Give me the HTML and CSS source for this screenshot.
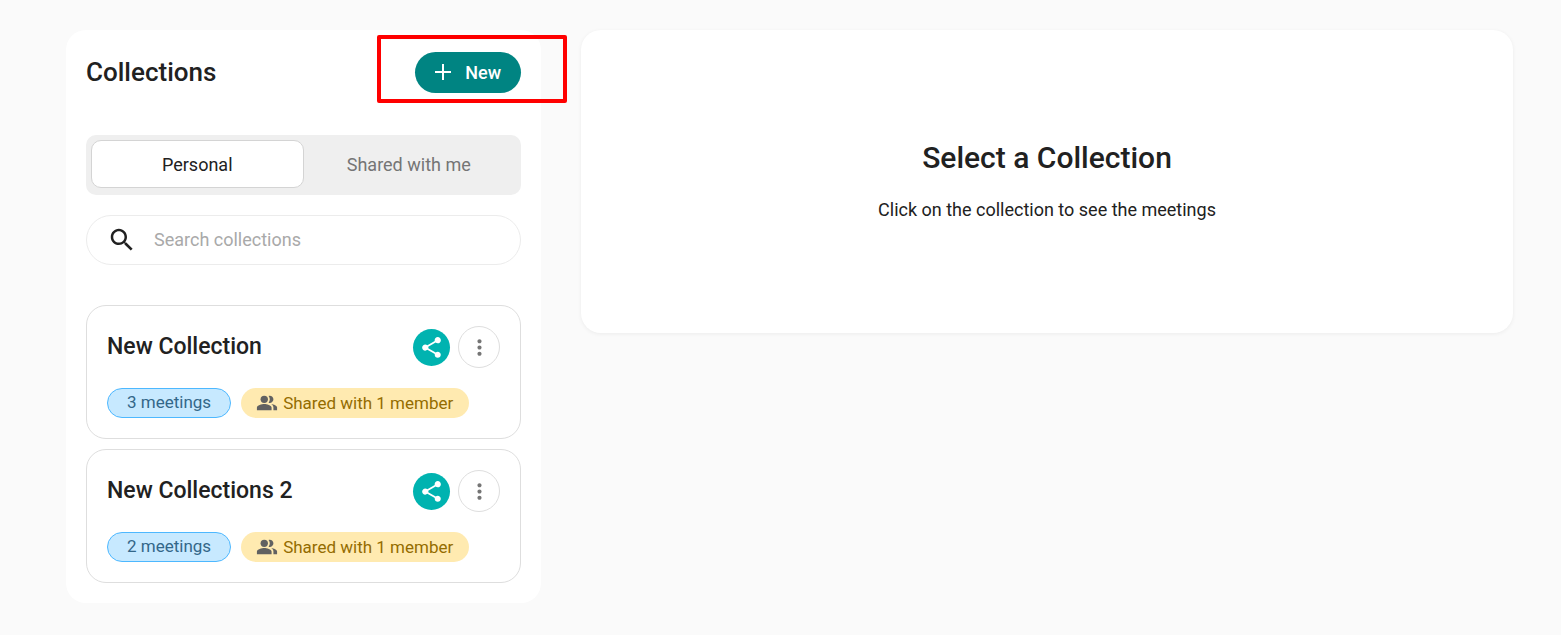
FILE: index.html
```html
<!DOCTYPE html>
<html lang="en">
<head>
<meta charset="utf-8">
<meta name="viewport" content="width=device-width, initial-scale=1">
<title>Collections</title>
<link rel="stylesheet" href="styles.css">
</head>
<body>
<svg class="sprite" aria-hidden="true">
  <symbol id="share" viewBox="0 0 24 24"><path d="M18 16.08c-.76 0-1.44.3-1.96.77L8.91 12.7c.05-.23.09-.46.09-.7s-.04-.47-.09-.7l7.05-4.11c.54.5 1.25.81 2.04.81 1.66 0 3-1.34 3-3s-1.34-3-3-3-3 1.34-3 3c0 .24.04.47.09.7L8.04 9.81C7.5 9.31 6.79 9 6 9c-1.66 0-3 1.34-3 3s1.34 3 3 3c.79 0 1.5-.31 2.04-.81l7.12 4.16c-.05.21-.08.43-.08.65 0 1.61 1.31 2.92 2.92 2.92s2.92-1.31 2.92-2.92-1.31-2.92-2.92-2.92z"/></symbol>
  <symbol id="more" viewBox="0 0 24 24"><path d="M12 8c1.1 0 2-.9 2-2s-.9-2-2-2-2 .9-2 2 .9 2 2 2zm0 2c-1.1 0-2 .9-2 2s.9 2 2 2 2-.9 2-2-.9-2-2-2zm0 6c-1.1 0-2 .9-2 2s.9 2 2 2 2-.9 2-2-.9-2-2-2z"/></symbol>
  <symbol id="people" viewBox="0 0 24 24"><path d="M16.67 13.13C18.04 14.06 19 15.32 19 17v3h4v-3c0-2.18-3.57-3.47-6.33-3.87z"/><circle cx="9" cy="8" r="4"/><path d="M15 12c2.21 0 4-1.79 4-4s-1.79-4-4-4c-.47 0-.91.1-1.33.24C14.5 5.27 15 6.58 15 8s-.5 2.73-1.33 3.76c.42.14.86.24 1.33.24zM9 13c-2.67 0-8 1.34-8 4v3h16v-3c0-2.66-5.33-4-8-4z"/></symbol>
</svg>
<div class="page">
  <aside class="sidebar">
    <header class="sidebar-header">
      <h1 class="sidebar-title">Collections</h1>
      <button class="new-button" type="button">
        <svg class="new-icon" viewBox="0 0 16 16" aria-hidden="true"><path d="M8 0v16M0 8h16"/></svg>
        New
      </button>
      <div class="highlight"></div>
    </header>
    <div class="tabs">
      <button class="tab tab-active" type="button">Personal</button>
      <button class="tab" type="button">Shared with me</button>
    </div>
    <label class="search">
      <svg class="search-icon" viewBox="0 0 24 24" aria-hidden="true"><path d="M15.5 14h-.79l-.28-.27C15.41 12.59 16 11.11 16 9.5 16 5.91 13.09 3 9.5 3S3 5.91 3 9.5 5.91 16 9.5 16c1.61 0 3.09-.59 4.23-1.57l.27.28v.79l5 4.99L20.49 19l-4.99-5zm-6 0C7.01 14 5 11.99 5 9.5S7.01 5 9.5 5 14 7.01 14 9.5 11.99 14 9.5 14z"/></svg>
      <input class="search-input" type="text" placeholder="Search collections" aria-label="Search collections">
    </label>
    <div class="collections">
      <article class="card">
        <div class="card-header">
          <h2 class="card-title">New Collection</h2>
          <button class="share-button" type="button" aria-label="Share"><svg class="share-icon"><use href="#share"/></svg></button>
          <button class="more-button" type="button" aria-label="More options"><svg class="more-icon"><use href="#more"/></svg></button>
        </div>
        <div class="chips">
          <span class="chip chip-meetings">3 meetings</span>
          <span class="chip chip-shared"><svg class="people-icon"><use href="#people"/></svg>Shared with 1 member</span>
        </div>
      </article>
      <article class="card">
        <div class="card-header">
          <h2 class="card-title">New Collections 2</h2>
          <button class="share-button" type="button" aria-label="Share"><svg class="share-icon"><use href="#share"/></svg></button>
          <button class="more-button" type="button" aria-label="More options"><svg class="more-icon"><use href="#more"/></svg></button>
        </div>
        <div class="chips">
          <span class="chip chip-meetings">2 meetings</span>
          <span class="chip chip-shared"><svg class="people-icon"><use href="#people"/></svg>Shared with 1 member</span>
        </div>
      </article>
    </div>
  </aside>
  <main class="detail">
    <h2 class="detail-title">Select a Collection</h2>
    <p class="detail-text">Click on the collection to see the meetings</p>
  </main>
</div>
</body>
</html>
```
FILE: styles.css
```css
* {
  box-sizing: border-box;
}

body {
  margin: 0;
  background: #fafafa;
  color: #212121;
  font-family: Roboto, "Liberation Sans", sans-serif;
  font-size: 18px;
}

h1, h2, p {
  margin: 0;
  font-weight: 500;
}

button {
  padding: 0;
  border: 0;
  font: inherit;
  cursor: pointer;
}

.sprite {
  display: none;
}

.page {
  display: grid;
  grid-template-columns: 475px minmax(0, 1fr);
  align-items: start;
  gap: 40px;
  padding: 30px 48px 30px 66px;
}

.sidebar {
  padding: 20px;
  border-radius: 20px;
  background: #fff;
}

.sidebar-header {
  position: relative;
  display: flex;
  align-items: center;
  justify-content: space-between;
  height: 45px;
  margin-bottom: 40px;
}

.sidebar-title {
  padding-bottom: 2px;
  font-size: 26px;
  line-height: 32px;
}

.new-button {
  display: flex;
  align-items: center;
  gap: 14px;
  height: 41px;
  padding: 0 20px 1px;
  border-radius: 21px;
  background: #008482;
  color: #fff;
  font-weight: 500;
}

.new-icon {
  width: 16px;
  height: 16px;
  fill: none;
  stroke: #fff;
  stroke-width: 2;
}

.highlight {
  position: absolute;
  top: -15px;
  right: -46px;
  width: 190px;
  height: 68px;
  border: 4px solid #f00;
  border-radius: 2px;
  pointer-events: none;
}

.tabs {
  display: flex;
  height: 60px;
  margin-bottom: 20px;
  padding: 5px 7px 7px 5px;
  border-radius: 10px;
  background: #efefef;
}

.tab {
  flex: 1;
  border-radius: 10px;
  background: transparent;
  color: #757575;
}

.tab-active {
  border: 1px solid #d4d4d4;
  background: #fff;
  color: #212121;
}

.search {
  display: flex;
  align-items: center;
  gap: 17px;
  height: 50px;
  margin-bottom: 40px;
  padding: 0 20px 1px;
  border: 1px solid #ececec;
  border-radius: 25px;
}

.search-icon {
  flex: none;
  width: 30px;
  height: 30px;
  fill: #212121;
}

.search-input {
  flex: 1;
  min-width: 0;
  padding: 0 0 1px;
  border: 0;
  outline: 0;
  background: none;
  color: #212121;
  font: inherit;
}

.search-input::placeholder {
  color: #a9a9a9;
}

.collections {
  display: grid;
  gap: 10px;
}

.card {
  padding: 20px;
  border: 1px solid #dedede;
  border-radius: 20px;
}

.card-header {
  display: flex;
  align-items: center;
  gap: 8px;
  margin-bottom: 20px;
}

.card-title {
  flex: 1;
  font-size: 23px;
  line-height: 32px;
}

.share-button,
.more-button {
  display: grid;
  place-items: center;
  border-radius: 50%;
}

.share-button {
  width: 37px;
  height: 37px;
  background: #00b3b0;
}

.share-icon {
  width: 25px;
  height: 25px;
  fill: #fff;
}

.more-button {
  width: 42px;
  height: 42px;
  border: 1px solid #dedede;
  background: #fff;
}

.more-icon {
  width: 25px;
  height: 25px;
  fill: #757575;
}

.chips {
  display: flex;
  gap: 10px;
}

.chip {
  display: flex;
  align-items: center;
  height: 30px;
  border-radius: 15px;
  font-size: 17px;
}

.chip-meetings {
  padding: 0 19px 2px;
  border: 1px solid #4db8ff;
  background: #c7e9ff;
  color: #336789;
}

.chip-shared {
  gap: 5px;
  padding: 0 16px 1px 15px;
  background: #ffeab0;
  color: #946c00;
}

.people-icon {
  width: 22px;
  height: 22px;
  fill: #616161;
}

.detail {
  display: flex;
  flex-direction: column;
  align-items: center;
  gap: 20px;
  padding: 108px 20px 111px;
  border-radius: 20px;
  background: #fff;
  box-shadow: 0 1px 4px rgba(0, 0, 0, 0.06);
}

.detail-title {
  font-size: 30px;
  line-height: 40px;
}

.detail-text {
  font-weight: 400;
  line-height: 24px;
}
```
